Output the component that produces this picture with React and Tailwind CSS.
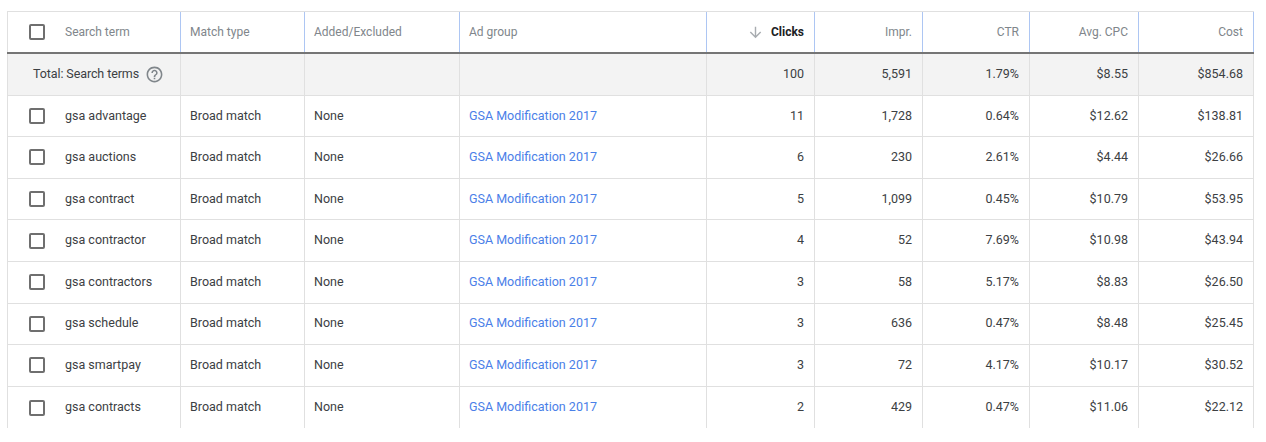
const columns = [
  { key: "term", label: "Search term", w: "w-[174px]", align: "left" },
  { key: "match", label: "Match type", w: "w-[124px]", align: "left" },
  { key: "added", label: "Added/Excluded", w: "w-[155px]", align: "left" },
  { key: "group", label: "Ad group", w: "w-[247px]", align: "left" },
  { key: "clicks", label: "Clicks", w: "w-[108px]", align: "right" },
  { key: "impr", label: "Impr.", w: "w-[108px]", align: "right" },
  { key: "ctr", label: "CTR", w: "w-[107px]", align: "right" },
  { key: "cpc", label: "Avg. CPC", w: "w-[109px]", align: "right" },
  { key: "cost", label: "Cost", w: "w-[115px]", align: "right" },
];

const rows = [
  ["gsa advantage", "11", "1,728", "0.64%", "$12.62", "$138.81"],
  ["gsa auctions", "6", "230", "2.61%", "$4.44", "$26.66"],
  ["gsa contract", "5", "1,099", "0.45%", "$10.79", "$53.95"],
  ["gsa contractor", "4", "52", "7.69%", "$10.98", "$43.94"],
  ["gsa contractors", "3", "58", "5.17%", "$8.83", "$26.50"],
  ["gsa schedule", "3", "636", "0.47%", "$8.48", "$25.45"],
  ["gsa smartpay", "3", "72", "4.17%", "$10.17", "$30.52"],
  ["gsa contracts", "2", "429", "0.47%", "$11.06", "$22.12"],
];

function Checkbox() {
  return <span className="block w-[16px] h-[16px] shrink-0 rounded-[2px] border-2 border-[#6f6f6f] bg-white" />;
}

function ArrowDown() {
  return (
    <svg width="17" height="17" viewBox="0 0 24 24" className="text-[#a8acb0]">
      <path d="M20 12l-1.41-1.41L13 16.17V4h-2v12.17l-5.58-5.59L4 12l8 8 8-8z" fill="currentColor" />
    </svg>
  );
}

function HelpIcon() {
  return (
    <svg width="19" height="19" viewBox="0 0 24 24" className="text-[#80868b] shrink-0">
      <path
        fill="currentColor"
        d="M11 18h2v-2h-2v2zm1-16C6.48 2 2 6.48 2 12s4.48 10 10 10 10-4.48 10-10S17.52 2 12 2zm0 18c-4.41 0-8-3.59-8-8s3.59-8 8-8 8 3.59 8 8-3.59 8-8 8zm0-14c-2.21 0-4 1.79-4 4h2c0-1.1.9-2 2-2s2 .9 2 2c0 2-3 1.75-3 5h2c0-2.25 3-2.5 3-5 0-2.21-1.79-4-4-4z"
      />
    </svg>
  );
}

function Cell({ col, first, children, className = "" }) {
  return (
    <div
      className={`${col.w} shrink-0 h-full flex items-center whitespace-nowrap px-[9px] ${
        col.align === "right" ? "justify-end pr-[10px]" : ""
      } ${first ? "border-l border-[#e0e0e0]" : ""} ${className}`}
    >
      {children}
    </div>
  );
}

export default function App() {
  return (
    <div className="bg-white w-[1266px] h-[442px] overflow-hidden pt-[11px] pl-[7px] font-['Roboto',sans-serif] text-[12.5px] text-[#3c4043]">
      {/* Header */}
      <div className="flex h-[43px] border-t border-b-2 border-t-[#e0e0e0] border-b-[#757575] w-max">
        {columns.map((col, i) => (
          <Cell
            key={col.key}
            col={col}
            first={i === 0}
            className="border-r border-r-[#adc6f3] text-[12px] text-[#80868b]"
          >
            {i === 0 && (
              <span className="ml-[12px] mr-[20px]">
                <Checkbox />
              </span>
            )}
            {col.key === "clicks" ? (
              <span className="flex items-center gap-[7px]">
                <ArrowDown />
                <span className="font-bold text-[#202124]">{col.label}</span>
              </span>
            ) : (
              col.label
            )}
          </Cell>
        ))}
      </div>

      {/* Total row */}
      <div className="flex h-[41.6px] border-b border-[#e0e0e0] bg-[#f3f3f3] w-max">
        {columns.map((col, i) => {
          const vals = { clicks: "100", impr: "5,591", ctr: "1.79%", cpc: "$8.55", cost: "$854.68" };
          return (
            <Cell key={col.key} col={col} first={i === 0} className="border-r border-r-[#e0e0e0]">
              {i === 0 ? (
                <span className="flex items-center gap-[6px] pl-[16px] tracking-[-0.1px]">
                  Total: Search terms
                  <HelpIcon />
                </span>
              ) : (
                vals[col.key] || ""
              )}
            </Cell>
          );
        })}
      </div>

      {/* Data rows */}
      {rows.map((r, idx) => {
        const vals = {
          term: r[0],
          match: "Broad match",
          added: "None",
          group: "GSA Modification 2017",
          clicks: r[1],
          impr: r[2],
          ctr: r[3],
          cpc: r[4],
          cost: r[5],
        };
        const last = idx === rows.length - 1;
        return (
          <div
            key={r[0]}
            className={`flex h-[41.6px] w-max ${last ? "" : "border-b border-[#e0e0e0]"}`}
          >
            {columns.map((col, i) => (
              <Cell key={col.key} col={col} first={i === 0} className="border-r border-r-[#e0e0e0]">
                {i === 0 && (
                  <span className="ml-[12px] mr-[20px]">
                    <Checkbox />
                  </span>
                )}
                {col.key === "group" ? (
                  <span className="text-[#4a80e8]">{vals[col.key]}</span>
                ) : (
                  vals[col.key]
                )}
              </Cell>
            ))}
          </div>
        );
      })}
    </div>
  );
}
